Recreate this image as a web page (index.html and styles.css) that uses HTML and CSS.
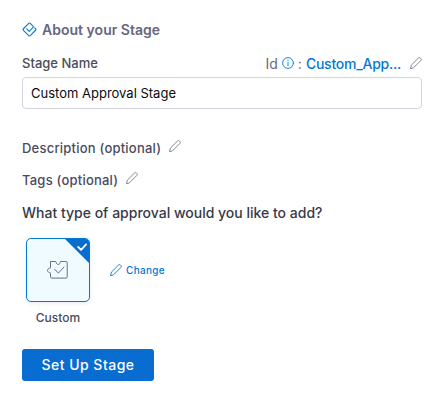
FILE: index.html
```html
<!DOCTYPE html>
<html lang="en">
<head>
<meta charset="utf-8">
<title>About your Stage</title>
<link rel="stylesheet" href="styles.css">
</head>
<body>
<svg class="defs" width="0" height="0" aria-hidden="true">
  <symbol id="pencil" viewBox="0 0 12 12"><path d="M.6 11.4l.8-3.3L8.5 1a1.35 1.35 0 0 1 1.9 0l.5.5a1.35 1.35 0 0 1 0 1.9l-7.1 7.1z"/></symbol>
</svg>
<main class="stage">
  <h1 class="title">
    <svg class="title-icon" viewBox="0 0 14 14"><path d="M10 3.7L7.7 1.3a1 1 0 0 0-1.4 0l-5 5a1 1 0 0 0 0 1.4l5 5a1 1 0 0 0 1.4 0l5-5a1 1 0 0 0 0-1.4l-.8-.8M4.4 6.4l2.3 2.3L11 4.4"/></svg>
    <span>About your Stage</span>
  </h1>
  <div class="name-row">
    <label class="label" for="name">Stage Name</label>
    <div class="id">
      <span>Id</span>
      <svg class="info" viewBox="0 0 12 12"><circle cx="6" cy="6" r="5.4"/><path d="M6 5.2v3.6M6 3v.5"/></svg>
      <span class="colon">:</span>
      <span class="id-value">Custom_App...</span>
      <svg class="pencil"><use href="#pencil"/></svg>
    </div>
  </div>
  <input class="name-input" id="name" type="text" value="Custom Approval Stage">
  <div class="optional description"><span>Description (optional)</span><svg class="pencil"><use href="#pencil"/></svg></div>
  <div class="optional tags"><span>Tags (optional)</span><svg class="pencil"><use href="#pencil"/></svg></div>
  <p class="question">What type of approval would you like to add?</p>
  <div class="choice">
    <div class="option">
      <div class="card">
        <svg class="puzzle" viewBox="0 0 23 20"><path d="M5 1.5h4.6c.8 0 .3 1 .9 2 .8 1.2 2.7 1.2 3.4 0 .6-1 0-2 .9-2h5.1a1.3 1.3 0 0 1 1.3 1.3v14a1.3 1.3 0 0 1-1.3 1.3H5.8a1.3 1.3 0 0 1-1.3-1.3v-3.6c0-.8-.9-.3-1.8-.8-1.5-.9-1.5-3.1 0-4 .9-.5 1.8.1 1.8-.8V2a.5.5 0 0 1 .5-.5zM8.5 9.3l3.9 3.8L18 7"/></svg>
        <svg class="corner" viewBox="0 0 26 26"><path class="corner-fill" d="M0 0h26v26z"/><path class="corner-check" d="M14.2 9l2.9 2.9 5-5.5"/></svg>
      </div>
      <span class="card-label">Custom</span>
    </div>
    <button class="change" type="button"><svg class="pencil"><use href="#pencil"/></svg><span>Change</span></button>
  </div>
  <button class="setup" type="button">Set Up Stage</button>
</main>
</body>
</html>
```
FILE: styles.css
```css
* { box-sizing: border-box; }
body { margin: 0; background: #fff; color: #4a4b5c; font-family: Inter, "Liberation Sans", sans-serif; font-size: 13px; }
button { border: 0; padding: 0; background: none; font-family: inherit; }
svg { display: block; flex: none; fill: none; stroke: currentColor; stroke-linecap: round; stroke-linejoin: round; }
.defs { position: absolute; }
.stage { width: 422px; padding: 19px 0 0 22px; }
.title { display: flex; align-items: center; gap: 5px; height: 20px; margin: 0; color: #666780; font-size: 14px; font-weight: 600; letter-spacing: .02px; white-space: nowrap; }
.title-icon { width: 15px; height: 15px; color: #0278d5; stroke-width: 1; }
.name-row { display: flex; justify-content: space-between; align-items: center; height: 20px; margin-top: 14px; }
.label { font-weight: 500; }
.id { display: flex; align-items: center; color: #666780; font-size: 14px; }
.info { width: 12px; height: 12px; margin: 0 4px; color: #0278d5; stroke-width: .9; }
.id-value { margin-left: 4px; color: #0278d5; font-weight: 450; letter-spacing: -.24px; }
.pencil { width: 12px; height: 12px; color: #77788c; stroke-width: .9; }
.id .pencil { margin-left: 9px; }
.name-input { display: block; width: 400px; height: 32px; margin-top: 4px; padding: 0 8px; border: 1px solid #d3d4e1; border-radius: 4px; outline: 0; background: #fff; color: #0b0b0d; font: 400 13px Inter, sans-serif; }
.optional { display: flex; align-items: center; gap: 8px; height: 20px; font-weight: 500; letter-spacing: .22px; }
.optional .pencil { margin-top: -4px; }
.description { margin-top: 29px; }
.tags { margin-top: 12px; }
.question { height: 20px; margin: 13px 0 0; color: #383946; font-size: 14px; line-height: 20px; font-weight: 500; white-space: nowrap; }
.choice { display: flex; gap: 20px; height: 88px; margin: 15px 0 0 4px; }
.option { display: flex; flex-direction: column; align-items: center; width: 64px; }
.card { position: relative; display: grid; place-items: center; width: 64px; height: 64px; padding-right: 1px; border: 1px solid #0278d5; border-radius: 5px; background: #effbff; box-shadow: 0 1px 4px #60617029; overflow: hidden; }
.puzzle { width: 23px; height: 20px; color: #6b6d85; stroke-width: 1; }
.corner { position: absolute; top: -1px; right: -1px; width: 26px; height: 26px; stroke: none; }
.corner-fill { fill: #086cd0; }
.corner-check { stroke: #fff; stroke-width: 1.8; }
.card-label { margin-top: 8px; font-size: 12px; line-height: 16px; font-weight: 500; letter-spacing: .05px; }
.change { display: flex; align-items: center; gap: 4px; height: 64px; color: #0278d5; font-size: 10px; font-weight: 500; letter-spacing: .3px; }
.change .pencil { color: #0278d5; }
.setup { display: block; width: 132px; height: 32px; margin-top: 23px; padding: 0 0 1px; border-radius: 3px; background: #086cd0; color: #fff; font-size: 14px; font-weight: 500; letter-spacing: .48px; }
```
